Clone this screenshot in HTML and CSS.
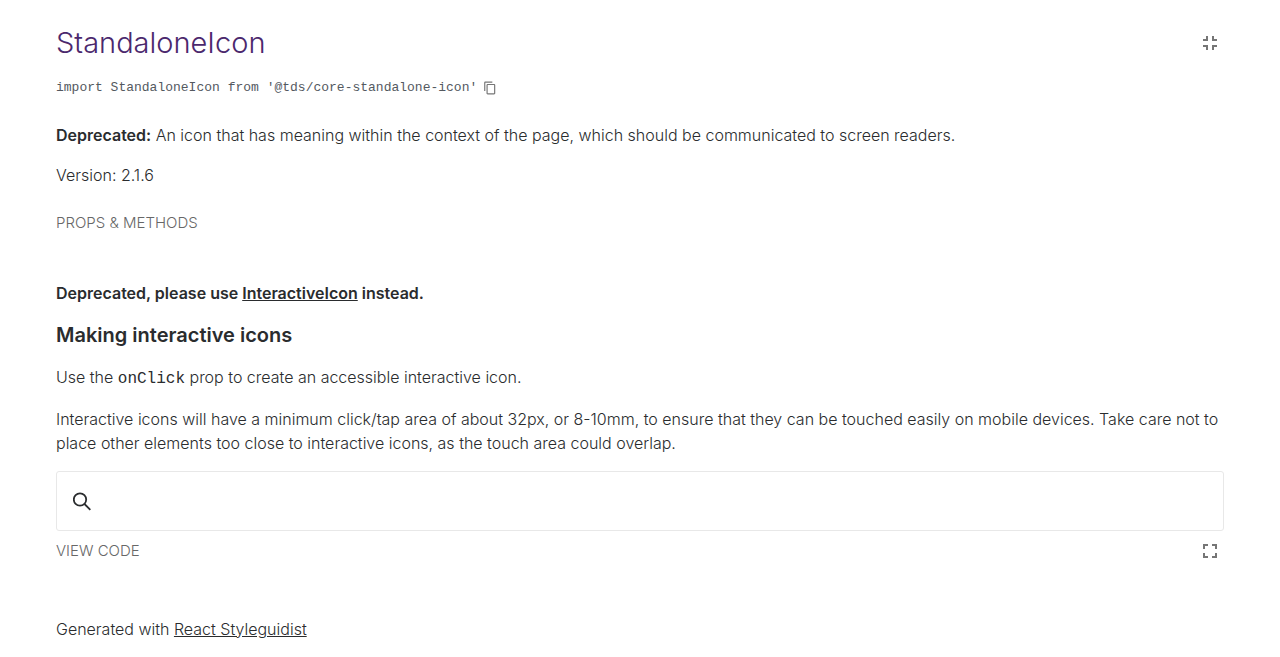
FILE: index.html
```html
<!DOCTYPE html>
<html lang="en">
<head>
<meta charset="utf-8">
<title>StandaloneIcon</title>
<meta name="viewport" content="width=device-width, initial-scale=1">
<link rel="stylesheet" href="styles.css">
</head>
<body>
<main class="page">
  <header class="component-header">
    <div class="title-row">
      <h1 class="title">StandaloneIcon</h1>
      <button class="icon-button" type="button" aria-label="Exit isolated mode">
        <svg width="24" height="24" viewBox="0 0 24 24" fill="currentColor" aria-hidden="true"><path d="M5 16h3v3h2v-5H5v2zm3-8H5v2h5V5H8v3zm6 11h2v-3h3v-2h-5v5zm2-11V5h-2v5h5V8h-3z"/></svg>
      </button>
    </div>
    <div class="import-row">
      <code class="import">import StandaloneIcon from '@tds/core-standalone-icon'</code>
      <button class="copy-button" type="button" aria-label="Copy to clipboard">
        <svg width="14" height="14" viewBox="0 0 24 24" fill="currentColor" aria-hidden="true"><path d="M16 1H4c-1.100 0-2 .9-2 2v14h2V3h12V1zm3 4H8c-1.100 0-2 .9-2 2v14c0 1.100.9 2 2 2h11c1.100 0 2-.9 2-2V7c0-1.100-.9-2-2-2zm0 16H8V7h11v14z"/></svg>
      </button>
    </div>
  </header>
  <div class="summary">
    <p class="text"><strong>Deprecated:</strong> An icon that has meaning within the context of the page, which should be communicated to screen readers.</p>
    <p class="text">Version: 2.1.6</p>
  </div>
  <button class="tab-button" type="button">Props &amp; methods</button>
  <section class="docs">
    <p class="text"><strong>Deprecated, please use <a class="link" href="#interactive-icon">InteractiveIcon</a> instead.</strong></p>
    <h2 class="heading">Making interactive icons</h2>
    <p class="text">Use the <code class="code">onClick</code> prop to create an accessible interactive icon.</p>
    <p class="text">Interactive icons will have a minimum click/tap area of about 32px, or 8-10mm, to ensure that they can be touched easily on mobile devices. Take care not to place other elements too close to interactive icons, as the touch area could overlap.</p>
  </section>
  <section class="example">
    <div class="preview">
      <button class="search-button" type="button" aria-label="Search">
        <svg width="20" height="20" viewBox="0 0 20 20" fill="none" stroke="currentColor" stroke-width="1.800" aria-hidden="true"><circle cx="7" cy="7.500" r="6.200"/><path d="M11.500 12L17.300 17.800"/></svg>
      </button>
    </div>
    <div class="example-bar">
      <button class="tab-button" type="button">View code</button>
      <button class="icon-button" type="button" aria-label="Open isolated">
        <svg width="24" height="24" viewBox="0 0 24 24" fill="currentColor" aria-hidden="true"><path d="M7 14H5v5h5v-2H7v-3zm-2-4h2V7h3V5H5v5zm12 7h-3v2h5v-5h-2v3zM14 5v2h3v3h2V5h-5z"/></svg>
      </button>
    </div>
  </section>
  <footer class="text footer">Generated with <a class="link" href="#react-styleguidist">React Styleguidist</a></footer>
</main>
</body>
</html>
```
FILE: styles.css
```css
* { box-sizing: border-box; }

body {
  margin: 0;
  background: #fff;
  color: #2a2c2e;
  font-family: Inter, "Liberation Sans", sans-serif;
  font-size: 16px;
  font-weight: 300;
  line-height: 24px;
}

h1, h2, p { margin: 0; }

button {
  padding: 0;
  border: 0;
  background: none;
  color: #767676;
  font: inherit;
  cursor: pointer;
}

svg { display: block; }

.page { padding: 23px 56px 16px; }

.title-row,
.example-bar {
  display: flex;
  align-items: center;
  justify-content: space-between;
}

.title {
  color: #4b286d;
  font-size: 29px;
  font-weight: 300;
  line-height: 40px;
}

.icon-button { padding: 0 2px; }

.import-row {
  display: flex;
  align-items: center;
  gap: 6px;
  margin-top: 13px;
}

.import {
  color: #54595f;
  font-family: "Liberation Mono", monospace;
  font-size: 13px;
  font-weight: 400;
}

.summary {
  display: grid;
  gap: 16px;
  margin: 23px 0 24px;
}

strong { font-weight: 600; }

.tab-button {
  display: block;
  color: #676767;
  font-size: 15px;
  text-transform: uppercase;
}

.docs {
  display: grid;
  gap: 18px;
  margin: 46px 0 16px;
}

.link { color: inherit; text-decoration: underline; }

.heading {
  font-size: 20px;
  font-weight: 600;
}

.code {
  font-family: "Liberation Mono", monospace;
  font-size: 16px;
  font-weight: 400;
  line-height: 1;
}

.preview {
  padding: 16px;
  border: 1px solid #e8e8e8;
  border-radius: 3px;
}

.search-button {
  display: block;
  padding: 4px 0 2px;
  color: #2a2c2e;
}

.example-bar { margin-top: 8px; }

.footer { margin-top: 54px; }
```
